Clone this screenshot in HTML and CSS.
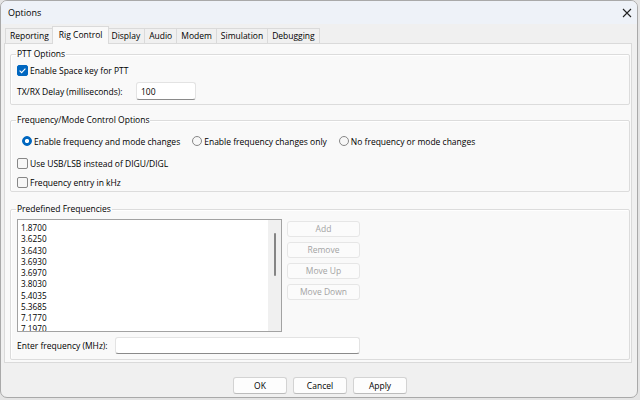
FILE: index.html
```html
<!DOCTYPE html>
<html>
<head>
<meta charset="utf-8">
<title>Options</title>
<link rel="stylesheet" href="styles.css">
</head>
<body>
<div class="window">
  <div class="titlebar">
    <span class="title">Options</span>
    <svg class="close" width="10" height="10" viewBox="0 0 10 10"><path d="M1 1 L9 9 M9 1 L1 9" stroke="#222" stroke-width="1.1" fill="none"/></svg>
  </div>
  <div class="content">
    <div class="tabs">
      <div class="tab">Reporting</div>
      <div class="tab active">Rig Control</div>
      <div class="tab">Display</div>
      <div class="tab">Audio</div>
      <div class="tab">Modem</div>
      <div class="tab">Simulation</div>
      <div class="tab">Debugging</div>
    </div>
    <div class="panel">
      <fieldset class="group ptt">
        <legend>PTT Options</legend>
        <div class="check-row"><span class="checkbox checked"><svg width="11" height="11" viewBox="0 0 11 11"><path d="M2.6 5.6 L4.6 7.6 L8.4 3.6" stroke="#fff" stroke-width="1.1" fill="none"/></svg></span><span>Enable Space key for PTT</span></div>
        <div class="field-row delay-row"><span class="field-label delay-label">TX/RX Delay (milliseconds):</span><span class="textbox delay-box">100</span></div>
      </fieldset>
      <fieldset class="group freq-mode">
        <legend>Frequency/Mode Control Options</legend>
        <div class="radio-row">
          <span class="radio-item"><span class="radio on"></span>Enable frequency and mode changes</span>
          <span class="radio-item"><span class="radio"></span>Enable frequency changes only</span>
          <span class="radio-item"><span class="radio"></span>No frequency or mode changes</span>
        </div>
        <div class="check-row usb-row"><span class="checkbox"></span><span>Use USB/LSB instead of DIGU/DIGL</span></div>
        <div class="check-row khz-row"><span class="checkbox"></span><span>Frequency entry in kHz</span></div>
      </fieldset>
      <fieldset class="group predefined">
        <legend>Predefined Frequencies</legend>
        <div class="list-area">
          <div class="listbox">
            <div class="list-items">
              <div class="item">1.8700</div>
              <div class="item">3.6250</div>
              <div class="item">3.6430</div>
              <div class="item">3.6930</div>
              <div class="item">3.6970</div>
              <div class="item">3.8030</div>
              <div class="item">5.4035</div>
              <div class="item">5.3685</div>
              <div class="item">7.1770</div>
              <div class="item">7.1970</div>
            </div>
            <div class="scrollbar"><div class="thumb"></div></div>
          </div>
          <div class="side-buttons">
            <button class="btn disabled" disabled>Add</button>
            <button class="btn disabled" disabled>Remove</button>
            <button class="btn disabled" disabled>Move Up</button>
            <button class="btn disabled" disabled>Move Down</button>
          </div>
        </div>
        <div class="field-row enter-row"><span class="field-label enter-label">Enter frequency (MHz):</span><span class="textbox enter-box"></span></div>
      </fieldset>
    </div>
    <div class="footer">
      <button class="btn dlg">OK</button>
      <button class="btn dlg">Cancel</button>
      <button class="btn dlg">Apply</button>
    </div>
  </div>
</div>
</body>
</html>
```
FILE: styles.css
```css
* { box-sizing: border-box; }
html, body { margin: 0; padding: 0; }
body {
  width: 640px;
  height: 400px;
  background: #e4e4e4;
  font-family: "Open Sans", "Noto Sans", sans-serif;
  font-size: 8.5px;
  color: #000;
  overflow: hidden;
}
.window {
  width: 638px;
  height: 398px;
  background: #f0f0f0;
  border: 1px solid #a9a9a9;
  border-radius: 7px;
  display: flex;
  flex-direction: column;
  overflow: hidden;
}
.titlebar {
  flex: none;
  height: 23px;
  background: #eef2f8;
  display: flex;
  align-items: center;
  justify-content: space-between;
  padding: 0 5px 0 7px;
}
.title { font-size: 9px; }
.content {
  flex: 1;
  display: flex;
  flex-direction: column;
}
.tabs {
  flex: none;
  height: 19px;
  display: flex;
  align-items: flex-end;
  padding-left: 4px;
}
.tab {
  height: 15px;
  line-height: 14px;
  padding: 0 4px;
  border: 1px solid #dadada;
  border-bottom: none;
  background: #f0f0f0;
  margin-left: -1px;
  white-space: nowrap;
}
.tab:first-child { margin-left: 0; }
.tab.active {
  position: relative;
  z-index: 1;
  height: 18px;
  line-height: 16px;
  margin: 0 -2px -1px -2px;
  padding: 0 6px;
  background: #f9f9f9;
}
.panel {
  flex: none;
  margin: 0 5px 0 3px;
  background: #f9f9f9;
  border: 1px solid #dadada;
  padding: 4px 1px 2px 5px;
}
.group {
  margin: 0;
  border: 1px solid #dcdcdc;
  border-radius: 2px;
  box-shadow: inset 1px 1px 0 #fff;
  padding: 0 6px 5px 6px;
  min-width: 0;
}
.group legend {
  padding: 0 1px;
  margin-left: -1px;
  height: 12px;
  line-height: 12px;
}
.group.ptt { padding-bottom: 4px; }
.group.freq-mode { margin-top: 9px; padding-bottom: 2px; }
.group.predefined { margin-top: 11px; padding-bottom: 5px; }

.check-row {
  height: 14px;
  display: flex;
  align-items: center;
  gap: 2px;
  white-space: nowrap;
}
.ptt .check-row { margin-top: 3px; }
.checkbox {
  width: 11px;
  height: 11px;
  flex: none;
  border: 1px solid #878787;
  border-radius: 2px;
  background: #f7f7f7;
  display: flex;
}
.checkbox.checked {
  border-color: #0067c0;
  background: #0067c0;
}
.checkbox svg { margin: -1px; }

.field-row {
  display: flex;
  align-items: center;
  white-space: nowrap;
}
.delay-row { margin-top: 5px; }
.delay-label { width: 119px; }
.enter-label { width: 98px; }
.textbox {
  background: #fff;
  border: 1px solid #e3e3e3;
  border-bottom-color: #8a8a8a;
  border-radius: 3px;
  padding-left: 4px;
  display: flex;
  align-items: center;
}
.delay-box { width: 60px; height: 18px; }
.enter-row { margin-top: 5px; }
.enter-box { width: 245px; height: 17px; }

.radio-row {
  height: 14px;
  margin-top: 8px;
  padding-left: 5px;
  display: flex;
  align-items: center;
  gap: 12px;
  white-space: nowrap;
}
.radio-item { display: flex; align-items: center; gap: 2px; }
.radio {
  width: 10px;
  height: 10px;
  flex: none;
  border-radius: 50%;
  border: 1px solid #878787;
  background: #f7f7f7;
}
.radio.on {
  border-color: #0067c0;
  background: radial-gradient(circle, #fff 0 1.8px, #0067c0 2.4px);
}
.usb-row { margin-top: 8px; }
.khz-row { margin-top: 5px; }

.list-area {
  margin-top: 4px;
  display: flex;
  gap: 5px;
}
.listbox {
  width: 265px;
  height: 113px;
  border: 1px solid #a2a2a2;
  background: #fff;
  display: flex;
  overflow: hidden;
}
.list-items {
  flex: 1;
  padding: 2px 0 0 3px;
  font-size: 8.2px;
  line-height: 11.25px;
  overflow: hidden;
}
.scrollbar {
  width: 13px;
  flex: none;
  background: #f0f0f0;
  padding-top: 13px;
  display: flex;
  justify-content: center;
}
.thumb {
  width: 2px;
  height: 43px;
  background: #858585;
  border-radius: 1px;
}
.side-buttons {
  margin-top: 2px;
  display: flex;
  flex-direction: column;
  gap: 5px;
}
.btn {
  font-family: inherit;
  font-size: 8.5px;
  padding: 0;
  margin: 0;
  border-radius: 3px;
  line-height: 14px;
}
.btn.disabled {
  width: 73px;
  height: 16px;
  background: #fbfbfb;
  border: 1px solid #e6e6e6;
  color: #a3a3a3;
}
.footer {
  flex: none;
  margin-top: 14px;
  display: flex;
  justify-content: center;
  gap: 6px;
  padding-left: 2px;
}
.btn.dlg {
  width: 54px;
  height: 17px;
  background: #fdfdfd;
  border: 1px solid #d3d3d3;
  border-bottom-color: #bcbcbc;
  color: #000;
}
```
